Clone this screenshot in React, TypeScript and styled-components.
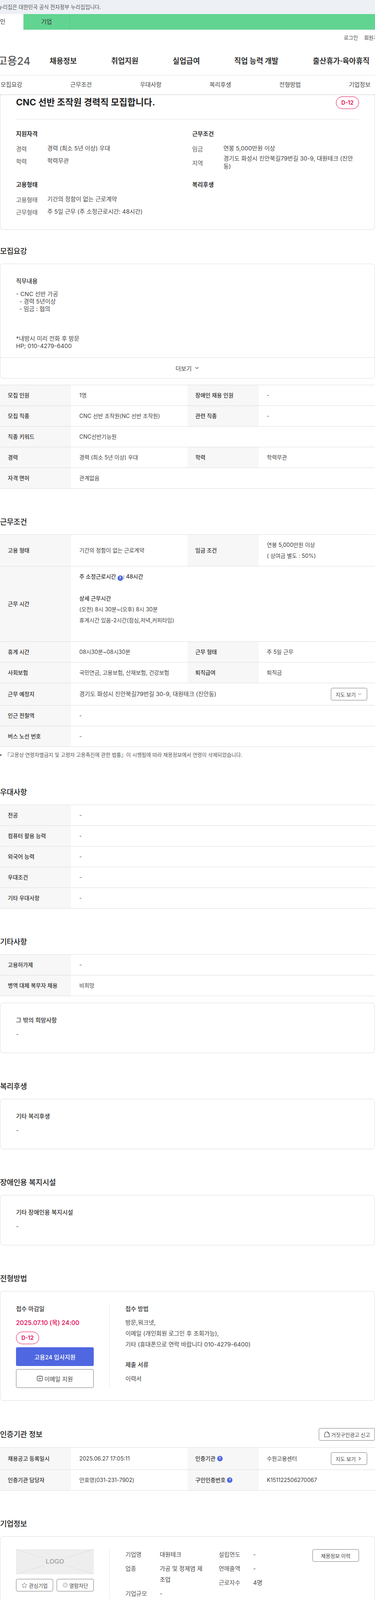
import styled, { createGlobalStyle } from "styled-components";
import { ChevronDown, ChevronRight, Star } from "lucide-react";

const GlobalStyle = createGlobalStyle`
  html, body {
    margin: 0;
    padding: 0;
    background: #fff;
    overflow-x: hidden;
  }
  body {
    font-family: Inter, "Noto Sans CJK KR", sans-serif;
    font-size: 14px;
    color: #333;
  }
  * {
    box-sizing: border-box;
  }
`;

function Help() {
  return <HelpDot>?</HelpDot>;
}

export default function App() {
  return (
    <Page>
      <GlobalStyle />

      <Header>
        <GovBanner>이 누리집은 대한민국 공식 전자정부 누리집입니다.</GovBanner>
        <UserTabs>
          <UserTab $active>개인</UserTab>
          <UserTab>기업</UserTab>
        </UserTabs>
        <UtilRow>
          <UtilLink>로그인</UtilLink>
          <UtilLink>회원가입</UtilLink>
        </UtilRow>
        <MainNav>
          <Logo>고용24</Logo>
          <NavList>
            <NavItem>채용정보</NavItem>
            <NavItem>취업지원</NavItem>
            <NavItem>실업급여</NavItem>
            <NavItem>직업 능력 개발</NavItem>
            <NavItem>출산휴가·육아휴직</NavItem>
          </NavList>
        </MainNav>
        <SubNav>
          <SubNavItem>모집요강</SubNavItem>
          <SubNavItem>근무조건</SubNavItem>
          <SubNavItem>우대사항</SubNavItem>
          <SubNavItem>복리후생</SubNavItem>
          <SubNavItem>전형방법</SubNavItem>
          <SubNavItem>기업정보</SubNavItem>
        </SubNav>
      </Header>

      <SummaryCard>
        <SummaryHead>
          <JobTitle>CNC 선반 조작원 경력직 모집합니다.</JobTitle>
          <DdayBadge>D-12</DdayBadge>
        </SummaryHead>
        <SummaryGrid>
          <div>
            <GroupTitle>지원자격</GroupTitle>
            <SummaryRow>
              <SummaryLabel>경력</SummaryLabel>
              <SummaryValue>경력 (최소 5년 이상) 우대</SummaryValue>
            </SummaryRow>
            <SummaryRow>
              <SummaryLabel>학력</SummaryLabel>
              <SummaryValue>학력무관</SummaryValue>
            </SummaryRow>
          </div>
          <div>
            <GroupTitle>근무조건</GroupTitle>
            <SummaryRow>
              <SummaryLabel>임금</SummaryLabel>
              <SummaryValue>연봉 5,000만원 이상</SummaryValue>
            </SummaryRow>
            <SummaryRow>
              <SummaryLabel>지역</SummaryLabel>
              <SummaryValue>경기도 화성시 진안북길79번길 30-9, 대원테크 (진안동)</SummaryValue>
            </SummaryRow>
          </div>
          <div>
            <GroupTitle>고용형태</GroupTitle>
            <SummaryRow>
              <SummaryLabel>고용형태</SummaryLabel>
              <SummaryValue>기간의 정함이 없는 근로계약</SummaryValue>
            </SummaryRow>
            <SummaryRow>
              <SummaryLabel>근무형태</SummaryLabel>
              <SummaryValue>주 5일 근무 (주 소정근로시간: 48시간)</SummaryValue>
            </SummaryRow>
          </div>
          <div>
            <GroupTitle>복리후생</GroupTitle>
          </div>
        </SummaryGrid>
      </SummaryCard>

      <Section $first>
        <SectionTitle>모집요강</SectionTitle>
        <Card>
          <CardBody>
            <CardTitle>직무내용</CardTitle>
            <JobText>
              {"- CNC 선반 가공\n  - 경력 5년이상\n  - 임금 : 협의\n\n\n\n*내방시 미리 전화 후 방문\nHP; 010-4279-6400"}
            </JobText>
          </CardBody>
          <MoreBar>
            더보기 <ChevronDown size={14} strokeWidth={2} />
          </MoreBar>
        </Card>
        <TableAfterCard>
          <Row>
            <Th>모집 인원</Th>
            <Td>1명</Td>
            <Th>장애인 채용 인원</Th>
            <Td>-</Td>
          </Row>
          <Row>
            <Th>모집 직종</Th>
            <Td>CNC 선반 조작원(NC 선반 조작원)</Td>
            <Th>관련 직종</Th>
            <Td>-</Td>
          </Row>
          <Row>
            <Th>직종 키워드</Th>
            <Td $wide>CNC선반기능원</Td>
          </Row>
          <Row>
            <Th>경력</Th>
            <Td>경력 (최소 5년 이상) 우대</Td>
            <Th>학력</Th>
            <Td>학력무관</Td>
          </Row>
          <Row>
            <Th>자격 면허</Th>
            <Td $wide>관계없음</Td>
          </Row>
        </TableAfterCard>
      </Section>

      <Section>
        <SectionTitle>근무조건</SectionTitle>
        <Table>
          <Row>
            <Th>고용 형태</Th>
            <Td>기간의 정함이 없는 근로계약</Td>
            <Th>임금 조건</Th>
            <Td>
              연봉 5,000만원 이상
              <br />( 상여금 별도 : 50%)
            </Td>
          </Row>
          <Row>
            <Th>근무 시간</Th>
            <Td $wide>
              <Strong>
                주 소정근로시간 <Help />: 48시간
              </Strong>
              <br />
              <br />
              <Strong>상세 근무시간</Strong>
              <br />
              (오전) 8시 30분~(오후) 8시 30분
              <br />
              휴게시간 있음-2시간(점심,저녁,커피타임)
              <br />
              <br />
            </Td>
          </Row>
          <Row>
            <Th>휴게 시간</Th>
            <Td>08시30분~08시30분</Td>
            <Th>근무 형태</Th>
            <Td>주 5일 근무</Td>
          </Row>
          <Row>
            <Th>사회보험</Th>
            <Td>국민연금, 고용보험, 산재보험, 건강보험</Td>
            <Th>퇴직급여</Th>
            <Td>퇴직금</Td>
          </Row>
          <Row>
            <Th>근무 예정지</Th>
            <TdAction $wide>
              <AddressText>경기도 화성시 진안북길79번길 30-9, 대원테크 (진안동)</AddressText>
              <OutlineButton>
                지도 보기 <ChevronDown size={14} strokeWidth={1.6} />
              </OutlineButton>
            </TdAction>
          </Row>
          <Row>
            <Th>인근 전철역</Th>
            <Td $wide>-</Td>
          </Row>
          <Row>
            <Th>버스 노선 번호</Th>
            <Td $wide>-</Td>
          </Row>
        </Table>
        <Note>『고용상 연령차별금지 및 고령자 고용촉진에 관한 법률』이 시행됨에 따라 채용정보에서 연령이 삭제되었습니다.</Note>
      </Section>

      <Section>
        <SectionTitle>우대사항</SectionTitle>
        <Table>
          <Row>
            <Th>전공</Th>
            <Td $wide>-</Td>
          </Row>
          <Row>
            <Th>컴퓨터 활용 능력</Th>
            <Td $wide>-</Td>
          </Row>
          <Row>
            <Th>외국어 능력</Th>
            <Td $wide>-</Td>
          </Row>
          <Row>
            <Th>우대조건</Th>
            <Td $wide>-</Td>
          </Row>
          <Row>
            <Th>기타 우대사항</Th>
            <Td $wide>-</Td>
          </Row>
        </Table>
      </Section>

      <Section>
        <SectionTitle>기타사항</SectionTitle>
        <Table>
          <Row>
            <Th>고용허가제</Th>
            <Td $wide>-</Td>
          </Row>
          <Row>
            <Th>병역 대체 복무자 채용</Th>
            <Td $wide>비희망</Td>
          </Row>
        </Table>
        <CardAfterTable>
          <CardBody>
            <CardTitle>그 밖의 희망사항</CardTitle>
            <CardLine>-</CardLine>
          </CardBody>
        </CardAfterTable>
      </Section>

      <Section>
        <SectionTitle>복리후생</SectionTitle>
        <Card>
          <CardBody>
            <CardTitle>기타 복리후생</CardTitle>
            <CardLine>-</CardLine>
          </CardBody>
        </Card>
      </Section>

      <Section>
        <SectionTitle>장애인용 복지시설</SectionTitle>
        <Card>
          <CardBody>
            <CardTitle>기타 장애인용 복지시설</CardTitle>
            <CardLine>-</CardLine>
          </CardBody>
        </Card>
      </Section>

      <Section>
        <SectionTitle>전형방법</SectionTitle>
        <Card>
          <SplitBody>
            <SplitLeft>
              <BlockTitle>접수 마감일</BlockTitle>
              <Deadline>2025.07.10 (목) 24:00</Deadline>
              <DeadlineBadge>D-12</DeadlineBadge>
              <ApplyButton>고용24 입사지원</ApplyButton>
              <EmailButton>
                <svg width="16" height="16" viewBox="0 0 16 16" fill="none" stroke="#333" strokeWidth="1.3">
                  <rect x="1" y="2" width="14" height="12" rx="3.5" />
                  <path d="M5 6.5 L8 9.2 L11 6.5" strokeLinecap="round" strokeLinejoin="round" />
                </svg>
                이메일 지원
              </EmailButton>
            </SplitLeft>
            <SplitRight>
              <BlockTitle>접수 방법</BlockTitle>
              <BlockText>
                방문,워크넷,
                <br />
                이메일 (개인회원 로그인 후 조회가능),
                <br />
                기타 (휴대폰으로 연락 바랍니다 010-4279-6400)
              </BlockText>
              <BlockTitleNext>제출 서류</BlockTitleNext>
              <BlockTextNext>이력서</BlockTextNext>
            </SplitRight>
          </SplitBody>
        </Card>
      </Section>

      <SectionTight>
        <HeadRow>
          <SectionTitleFlat>인증기관 정보</SectionTitleFlat>
          <ReportButton>
            <svg width="16" height="16" viewBox="0 0 16 16" fill="none" stroke="#333" strokeWidth="1.2">
              <path d="M2 14.5 H14 V8 A6 6.5 0 0 0 2 8 Z" strokeLinejoin="round" />
              <path d="M9.5 3.8 A3.5 3.5 0 0 1 11.6 6.5" strokeLinecap="round" />
            </svg>
            거짓구인광고 신고
          </ReportButton>
        </HeadRow>
        <Table>
          <Row>
            <Th>채용공고 등록일시</Th>
            <Td>2025.06.27 17:05:11</Td>
            <Th>
              인증기관 <Help />
            </Th>
            <TdAction>
              수원고용센터
              <OutlineButton>
                지도 보기 <ChevronRight size={14} strokeWidth={2} />
              </OutlineButton>
            </TdAction>
          </Row>
          <Row>
            <Th>인증기관 담당자</Th>
            <Td>안효영(031-231-7902)</Td>
            <Th>
              구인인증번호 <Help />
            </Th>
            <Td>K151122506270067</Td>
          </Row>
        </Table>
      </SectionTight>

      <Section>
        <SectionTitle>기업정보</SectionTitle>
        <Card>
          <SplitBody>
            <SplitLeft>
              <LogoBox>
                <svg width="199" height="64" viewBox="0 0 199 64" stroke="#dcdcdc" strokeWidth="1">
                  <path d="M0 0 L72 23 M199 0 L127 23 M0 64 L72 41 M199 64 L127 41" />
                </svg>
                <LogoText>LOGO</LogoText>
              </LogoBox>
              <LogoActions>
                <SmallButton>
                  <Star size={15} strokeWidth={1.3} />
                  관심기업
                </SmallButton>
                <SmallButton>
                  <svg width="14" height="14" viewBox="0 0 14 14">
                    <circle cx="7" cy="7" r="7" fill="#d9d9d9" />
                    <path d="M4.5 4.5 L9.5 9.5 M9.5 4.5 L4.5 9.5" stroke="#fff" strokeWidth="1.3" />
                  </svg>
                  열람차단
                </SmallButton>
              </LogoActions>
            </SplitLeft>
            <CompanyInfo>
              <CompanyList $width={206}>
                <CompanyRow>
                  <CompanyLabel>기업명</CompanyLabel>
                  <CompanyValue>대원테크</CompanyValue>
                </CompanyRow>
                <CompanyRow>
                  <CompanyLabel>업종</CompanyLabel>
                  <CompanyValue>가공 및 정제염 제조업</CompanyValue>
                </CompanyRow>
                <CompanyRow>
                  <CompanyLabel>기업규모</CompanyLabel>
                  <CompanyValue>-</CompanyValue>
                </CompanyRow>
              </CompanyList>
              <CompanyList $width={140}>
                <CompanyRow>
                  <CompanyLabel>설립연도</CompanyLabel>
                  <CompanyValue>-</CompanyValue>
                </CompanyRow>
                <CompanyRow>
                  <CompanyLabel>연매출액</CompanyLabel>
                  <CompanyValue>-</CompanyValue>
                </CompanyRow>
                <CompanyRow>
                  <CompanyLabel>근로자수</CompanyLabel>
                  <CompanyValue>4명</CompanyValue>
                </CompanyRow>
              </CompanyList>
              <HistoryButton>채용정보 이력</HistoryButton>
            </CompanyInfo>
          </SplitBody>
        </Card>
      </Section>
    </Page>
  );
}

/* ===== layout ===== */

const Page = styled.div`
  width: 960px;
  overflow: hidden;
`;

/* 원본 헤더는 1080 폭이라 좌우 60씩 잘린다 */
const Header = styled.header`
  width: 1080px;
  margin-left: -60px;
`;

const GovBanner = styled.div`
  height: 36px;
  padding-left: 39px;
  background: #edf0f5;
  color: #555;
  font-size: 13.3px;
  line-height: 36px;
`;

const UserTabs = styled.div`
  display: flex;
  height: 40px;
  background: #62d491;
`;

const UserTab = styled.div<{ $active?: boolean }>`
  width: ${(p) => (p.$active ? "120px" : "119px")};
  background: ${(p) => (p.$active ? "#fff" : "transparent")};
  border-right: ${(p) => (p.$active ? "none" : "1px solid #55c483")};
  color: #333;
  font-size: 15px;
  line-height: 40px;
  text-align: center;
`;

const UtilRow = styled.div`
  display: flex;
  justify-content: flex-end;
  gap: 16px;
  height: 40px;
  padding-right: 40px;
  line-height: 40px;
`;

const UtilLink = styled.span`
  color: #444;
  font-size: 13px;
`;

const MainNav = styled.nav`
  display: flex;
  align-items: center;
  height: 77px;
  padding-left: 54px;
  border-bottom: 1px solid #e5e5e5;
`;

const Logo = styled.div`
  flex: 0 0 133px;
  color: #555;
  font-size: 27px;
  font-weight: 500;
  white-space: nowrap;
`;

const NavList = styled.div`
  display: flex;
  gap: 88px;
`;

const NavItem = styled.div`
  color: #333;
  font-size: 19px;
  font-weight: 700;
  letter-spacing: -0.1px;
  white-space: nowrap;
`;

const SubNav = styled.div`
  position: relative;
  z-index: 1;
  display: grid;
  grid-template-columns: repeat(6, 178.33px);
  height: 48px;
  background: #fff;
  box-shadow: 0 2px 3px rgba(0, 0, 0, 0.12);
`;

const SubNavItem = styled.div`
  color: #444;
  font-size: 15px;
  line-height: 48px;
  text-align: center;
`;

/* ===== summary ===== */

const SummaryCard = styled.section`
  padding: 6px 40px 29px;
  border: 1px solid #ddd;
  border-top: none;
  border-radius: 0 0 8px 8px;
`;

const SummaryHead = styled.div`
  display: flex;
  justify-content: space-between;
  align-items: flex-start;
  padding-bottom: 26px;
  border-bottom: 1px solid #e5e5e5;
`;

const JobTitle = styled.h1`
  margin: 0;
  color: #222;
  font-size: 23px;
  font-weight: 700;
  line-height: 30px;
`;

const DdayBadge = styled.span`
  width: 59px;
  height: 32px;
  border: 1px solid #e6004e;
  border-radius: 16px;
  color: #e6004e;
  font-size: 14px;
  font-weight: 600;
  line-height: 30px;
  text-align: center;
`;

const SummaryGrid = styled.div`
  display: grid;
  grid-template-columns: 451px 427px;
  row-gap: 24px;
  padding-top: 24px;
`;

const GroupTitle = styled.h3`
  margin: 0 0 8px;
  color: #333;
  font-size: 15px;
  font-weight: 700;
  line-height: 26px;
`;

const SummaryRow = styled.div`
  display: flex;
  align-items: center;
  min-height: 32px;
`;

const SummaryLabel = styled.span`
  flex: 0 0 80px;
  color: #555;
  font-size: 15px;
`;

const SummaryValue = styled.span`
  color: #444;
  font-size: 15px;
  line-height: 20px;
`;

/* ===== sections ===== */

const Section = styled.section<{ $first?: boolean }>`
  margin-top: ${(p) => (p.$first ? "42px" : "72px")};
`;

const SectionTight = styled.section`
  margin-top: 70px;
`;

const SectionTitle = styled.h2`
  margin: 0 0 18px;
  color: #222;
  font-size: 19px;
  font-weight: 500;
  line-height: 27px;
  letter-spacing: -0.2px;
`;

const SectionTitleFlat = styled(SectionTitle)`
  margin: 0;
`;

const HeadRow = styled.div`
  display: flex;
  justify-content: space-between;
  align-items: center;
  margin-bottom: 17px;
`;

const Card = styled.div`
  border: 1px solid #ddd;
  border-radius: 8px;
`;

const CardAfterTable = styled(Card)`
  margin-top: 17px;
`;

const CardBody = styled.div`
  padding: 30px 40px 33px;
`;

const CardTitle = styled.h3`
  margin: 0 0 8px;
  color: #333;
  font-size: 15px;
  font-weight: 500;
  line-height: 28px;
`;

const CardLine = styled.div`
  color: #444;
  font-size: 15px;
  line-height: 28px;
`;

const JobText = styled.div`
  margin-top: 9px;
  margin-bottom: -13px;
  color: #444;
  font-size: 15px;
  line-height: 19px;
  white-space: pre-wrap;
`;

const MoreBar = styled.div`
  display: flex;
  justify-content: center;
  align-items: center;
  gap: 6px;
  height: 53px;
  border-top: 1px solid #ddd;
  color: #444;
  font-size: 15px;
`;

/* ===== table ===== */

const Table = styled.div`
  border-top: 1px solid #ddd;
`;

const TableAfterCard = styled(Table)`
  margin-top: 16px;
`;

const Row = styled.div`
  display: grid;
  grid-template-columns: 182px 298px 182px 298px;
  border-bottom: 1px solid #ddd;
`;

const Th = styled.div`
  display: flex;
  align-items: center;
  gap: 4px;
  padding: 12px 20px;
  background: #f7f7f7;
  color: #333;
  font-size: 14px;
  font-weight: 500;
  line-height: 28px;
`;

const Td = styled.div<{ $wide?: boolean }>`
  ${(p) => (p.$wide ? "grid-column: 2 / 5;" : "")}
  align-self: center;
  padding: 12px 20px 12px 21px;
  color: #444;
  font-size: 14px;
  line-height: 28px;
`;

const TdAction = styled(Td)`
  display: flex;
  justify-content: space-between;
  align-items: center;
  width: 100%;
`;

const AddressText = styled.span`
  font-size: 15px;
`;

const Strong = styled.span`
  color: #333;
  font-weight: 500;
`;

const HelpDot = styled.span`
  display: inline-flex;
  justify-content: center;
  align-items: center;
  width: 14px;
  height: 14px;
  border-radius: 50%;
  background: #4f67e0;
  color: #fff;
  font-size: 9px;
  font-weight: 700;
  line-height: 14px;
  vertical-align: -2px;
`;

const OutlineButton = styled.button`
  display: inline-flex;
  justify-content: center;
  align-items: center;
  gap: 3px;
  width: 93px;
  height: 32px;
  padding: 0;
  border: 1px solid #777;
  border-radius: 4px;
  background: #fff;
  color: #444;
  font-family: inherit;
  font-size: 13px;
`;

const Note = styled.p`
  margin: 10px 0 0;
  padding-left: 12px;
  position: relative;
  color: #555;
  font-size: 13px;
  line-height: 21px;

  &::before {
    content: "";
    position: absolute;
    left: 0;
    top: 9px;
    width: 4px;
    height: 4px;
    border-radius: 50%;
    background: #555;
  }
`;

/* ===== split cards ===== */

const SplitBody = styled.div`
  display: flex;
  padding: 32px 40px;
`;

const SplitLeft = styled.div`
  flex: 0 0 240px;
  padding-right: 40px;
  border-right: 1px solid #e5e5e5;
`;

const SplitRight = styled.div`
  padding-left: 40px;
`;

const BlockTitle = styled.h3`
  margin: 0;
  color: #333;
  font-size: 15px;
  font-weight: 500;
  line-height: 26px;
`;

const BlockTitleNext = styled(BlockTitle)`
  margin-top: 25px;
`;

const BlockText = styled.div`
  margin-top: 8px;
  color: #444;
  font-size: 15px;
  line-height: 28px;
`;

const BlockTextNext = styled(BlockText)`
  margin-top: 9px;
`;

const Deadline = styled.div`
  margin-top: 8px;
  color: #e6004e;
  font-size: 16px;
  font-weight: 500;
  line-height: 28px;
`;

const DeadlineBadge = styled(DdayBadge)`
  display: block;
  margin-top: 9px;
`;

const ApplyButton = styled.button`
  display: block;
  width: 199px;
  height: 48px;
  margin-top: 8px;
  border: none;
  border-radius: 4px;
  background: #4f67e0;
  color: #fff;
  font-family: inherit;
  font-size: 15px;
  font-weight: 500;
`;

const EmailButton = styled.button`
  display: flex;
  justify-content: center;
  align-items: center;
  gap: 3px;
  width: 199px;
  height: 48px;
  margin-top: 8px;
  border: 1px solid #777;
  border-radius: 4px;
  background: #fff;
  color: #444;
  font-family: inherit;
  font-size: 15px;
`;

const ReportButton = styled.button`
  display: flex;
  justify-content: center;
  align-items: center;
  gap: 3px;
  width: 144px;
  height: 32px;
  padding: 0;
  border: 1px solid #777;
  border-radius: 4px;
  background: #fff;
  color: #444;
  font-family: inherit;
  font-size: 13px;
`;

/* ===== company ===== */

const LogoBox = styled.div`
  position: relative;
  width: 199px;
  height: 64px;
  background: #eee;

  svg {
    display: block;
  }
`;

const LogoText = styled.span`
  position: absolute;
  inset: 0;
  color: #aaa;
  font-family: "Liberation Sans", sans-serif;
  font-size: 16px;
  font-weight: 700;
  line-height: 64px;
  text-align: center;
`;

const LogoActions = styled.div`
  display: flex;
  justify-content: space-between;
  margin-top: 12px;
`;

const SmallButton = styled.button`
  display: flex;
  justify-content: center;
  align-items: center;
  gap: 4px;
  width: 95px;
  height: 32px;
  padding: 0;
  border: 1px solid #777;
  border-radius: 4px;
  background: #fff;
  color: #444;
  font-family: inherit;
  font-size: 13px;
`;

const CompanyInfo = styled.div`
  display: flex;
  flex: 1;
  gap: 33px;
  padding-left: 40px;
`;

const CompanyList = styled.div<{ $width: number }>`
  display: flex;
  flex-direction: column;
  gap: 8px;
  width: ${(p) => p.$width}px;
`;

const CompanyRow = styled.div`
  display: flex;
  color: #444;
  font-size: 15px;
  line-height: 28px;
`;

const CompanyLabel = styled.span`
  flex: 0 0 88px;
  color: #555;
`;

const CompanyValue = styled.span`
  flex: 1;
`;

const HistoryButton = styled.button`
  width: 119px;
  height: 32px;
  margin-left: auto;
  padding: 0;
  border: 1px solid #777;
  border-radius: 4px;
  background: #fff;
  color: #444;
  font-family: inherit;
  font-size: 13px;
`;
